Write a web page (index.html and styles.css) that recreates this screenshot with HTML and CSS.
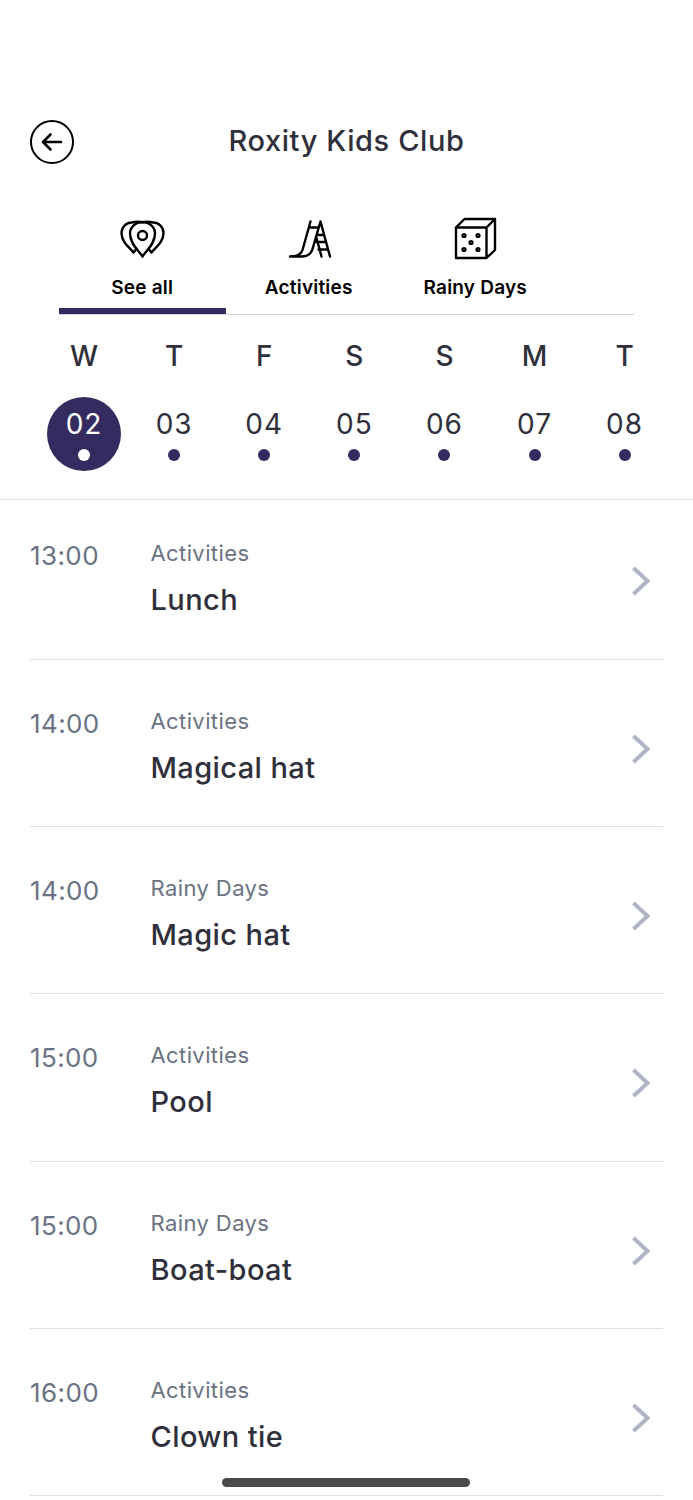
FILE: index.html
```
<!DOCTYPE html>
<html lang="en">
<head>
<meta charset="utf-8">
<title>Roxity Kids Club</title>
<link rel="stylesheet" href="styles.css">
</head>
<body>
<div class="screen">
  <header class="header">
    <svg class="back" viewBox="0 0 44 44"><circle cx="22" cy="22" r="21"/><path class="arrow" d="M31 22H13M20.500 14.500L13 22l7.500 7.500"/></svg>
    <h1 class="title">Roxity Kids Club</h1>
  </header>
  <nav class="tabs">
    <div class="tab active">
      <svg class="icon" viewBox="0 0 50 50"><path d="M25.500 42.500C22 37 13 30 13 19.500a12.500 11.500 0 0 1 25 0C38 30 29 37 25.500 42.500Z"/><circle cx="25.500" cy="21.500" r="4.500"/><path d="M25.500 8.500C22 7.200 17 8 14.500 8.500A10.500 10.500 0 0 0 4.500 19c0 9 7.500 14 12 19.500l2.500-3M25.500 8.500C29 7.200 34 8 36.500 8.500a10.500 10.500 0 0 1 10 10.500c0 9-7.500 14-12 19.500l-2.500-3"/></svg>
      <span class="tab-label">See all</span>
    </div>
    <div class="tab">
      <svg class="icon" viewBox="0 0 50 50"><path d="M26.500 7.500L18.500 36Q16.500 42.500 6 42.500H17Q26.500 42.500 28.500 35L36.500 7.500L46 42.500M32.500 24L37.500 42.500M25 13.500H35M34.500 21H40M32.500 28H42M34.500 35.500H44"/></svg>
      <span class="tab-label">Activities</span>
    </div>
    <div class="tab">
      <svg class="icon" viewBox="0 0 50 50"><path d="M6 13.500H36.500V44H6ZM6 13.500L14.500 5H45V36L36.500 44M36.500 13.500L45 5"/><g class="pips"><circle cx="14" cy="21.500" r="1.500"/><circle cx="28" cy="21.500" r="1.500"/><circle cx="21" cy="28.500" r="1.500"/><circle cx="14" cy="35.500" r="1.500"/><circle cx="28" cy="35.500" r="1.500"/></g></svg>
      <span class="tab-label">Rainy Days</span>
    </div>
  </nav>
  <section class="week">
    <div class="day"><span class="weekday">W</span><span class="date selected">02</span></div>
    <div class="day"><span class="weekday">T</span><span class="date">03</span></div>
    <div class="day"><span class="weekday">F</span><span class="date">04</span></div>
    <div class="day"><span class="weekday">S</span><span class="date">05</span></div>
    <div class="day"><span class="weekday">S</span><span class="date">06</span></div>
    <div class="day"><span class="weekday">M</span><span class="date">07</span></div>
    <div class="day"><span class="weekday">T</span><span class="date">08</span></div>
  </section>
  <main class="list">
    <article class="row"><time class="time">13:00</time><div class="info"><span class="category">Activities</span><span class="name">Lunch</span></div><svg class="chevron" viewBox="0 0 20 30"><path d="M2.500 2L16.500 15L2.500 28"/></svg></article>
    <article class="row"><time class="time">14:00</time><div class="info"><span class="category">Activities</span><span class="name">Magical hat</span></div><svg class="chevron" viewBox="0 0 20 30"><path d="M2.500 2L16.500 15L2.500 28"/></svg></article>
    <article class="row"><time class="time">14:00</time><div class="info"><span class="category">Rainy Days</span><span class="name">Magic hat</span></div><svg class="chevron" viewBox="0 0 20 30"><path d="M2.500 2L16.500 15L2.500 28"/></svg></article>
    <article class="row"><time class="time">15:00</time><div class="info"><span class="category">Activities</span><span class="name">Pool</span></div><svg class="chevron" viewBox="0 0 20 30"><path d="M2.500 2L16.500 15L2.500 28"/></svg></article>
    <article class="row"><time class="time">15:00</time><div class="info"><span class="category">Rainy Days</span><span class="name">Boat-boat</span></div><svg class="chevron" viewBox="0 0 20 30"><path d="M2.500 2L16.500 15L2.500 28"/></svg></article>
    <article class="row"><time class="time">16:00</time><div class="info"><span class="category">Activities</span><span class="name">Clown tie</span></div><svg class="chevron" viewBox="0 0 20 30"><path d="M2.500 2L16.500 15L2.500 28"/></svg></article>
  </main>
  <div class="home-indicator"></div>
</div>
</body>
</html>
```
FILE: styles.css
```
* { box-sizing: border-box; }
body { margin: 0; background: #fff; font-family: Inter, "Liberation Sans", sans-serif; color: #302f3c; }
.screen { position: relative; width: 693px; height: 1500px; overflow: hidden; }
svg { display: block; fill: none; stroke: #000; flex: none; }

.header { display: grid; grid-template-columns: 44px 1fr 44px; padding: 120px 30px 0; height: 214px; align-items: start; }
.back { width: 44px; height: 44px; stroke-width: 2; }
.arrow { stroke-width: 2.6; stroke-linecap: round; stroke-linejoin: round; }
.title { margin: 0; text-align: center; font-size: 29px; line-height: 41px; font-weight: 500; letter-spacing: .6px; }

.tabs { display: flex; margin: 0 59px; height: 101px; border-bottom: 1px solid #d2d2d4; }
.tab { width: 166.500px; height: 100px; display: flex; flex-direction: column; align-items: center; border-bottom: 6px solid transparent; }
.tab.active { border-color: #342b60; }
.icon { width: 50px; height: 50px; stroke-width: 2.4; stroke-linecap: round; stroke-linejoin: round; }
.pips { stroke-width: 2.2; }
.tab-label { margin-top: 11px; line-height: 25px; font-size: 19px; font-weight: 600; letter-spacing: .2px; color: #000; }

.week { display: grid; grid-template-columns: repeat(7, 90.100px); padding: 23px 0 0 39px; height: 185px; border-bottom: 1px solid #dfdfe8; }
.day { display: flex; flex-direction: column; align-items: center; }
.weekday { font-size: 28px; line-height: 36px; font-weight: 500; }
.date { display: flex; flex-direction: column; align-items: center; margin-top: 23px; width: 74px; height: 74px; border-radius: 50%; padding-top: 9px; font-size: 28px; line-height: 36px; letter-spacing: 1px; }
.date::after { content: ""; width: 12px; height: 12px; margin-top: 7px; border-radius: 50%; background: #342b60; }
.date.selected { background: #342b60; color: #fff; }
.date.selected::after { background: #fff; }

.list { padding: 0 30px; margin-top: -7.600px; }
.row { display: flex; height: 167.300px; padding-top: 46px; border-bottom: 1px solid #dfdfe8; }
.time { width: 120.500px; padding-top: 3px; font-size: 26px; line-height: 30px; letter-spacing: .4px; color: #6a7283; }
.info { flex: 1; display: flex; flex-direction: column; }
.category { font-size: 22px; line-height: 31px; letter-spacing: .4px; color: #6a7283; }
.name { margin-top: 13px; font-size: 29px; line-height: 36px; font-weight: 500; letter-spacing: .4px; }
.chevron { width: 20px; height: 30px; margin: 28px 12px 0 0; stroke: #afb5c5; stroke-width: 4; }
.home-indicator { position: absolute; left: 222px; top: 1477.500px; width: 248px; height: 9px; border-radius: 5px; background: #4b4b4b; }
```
